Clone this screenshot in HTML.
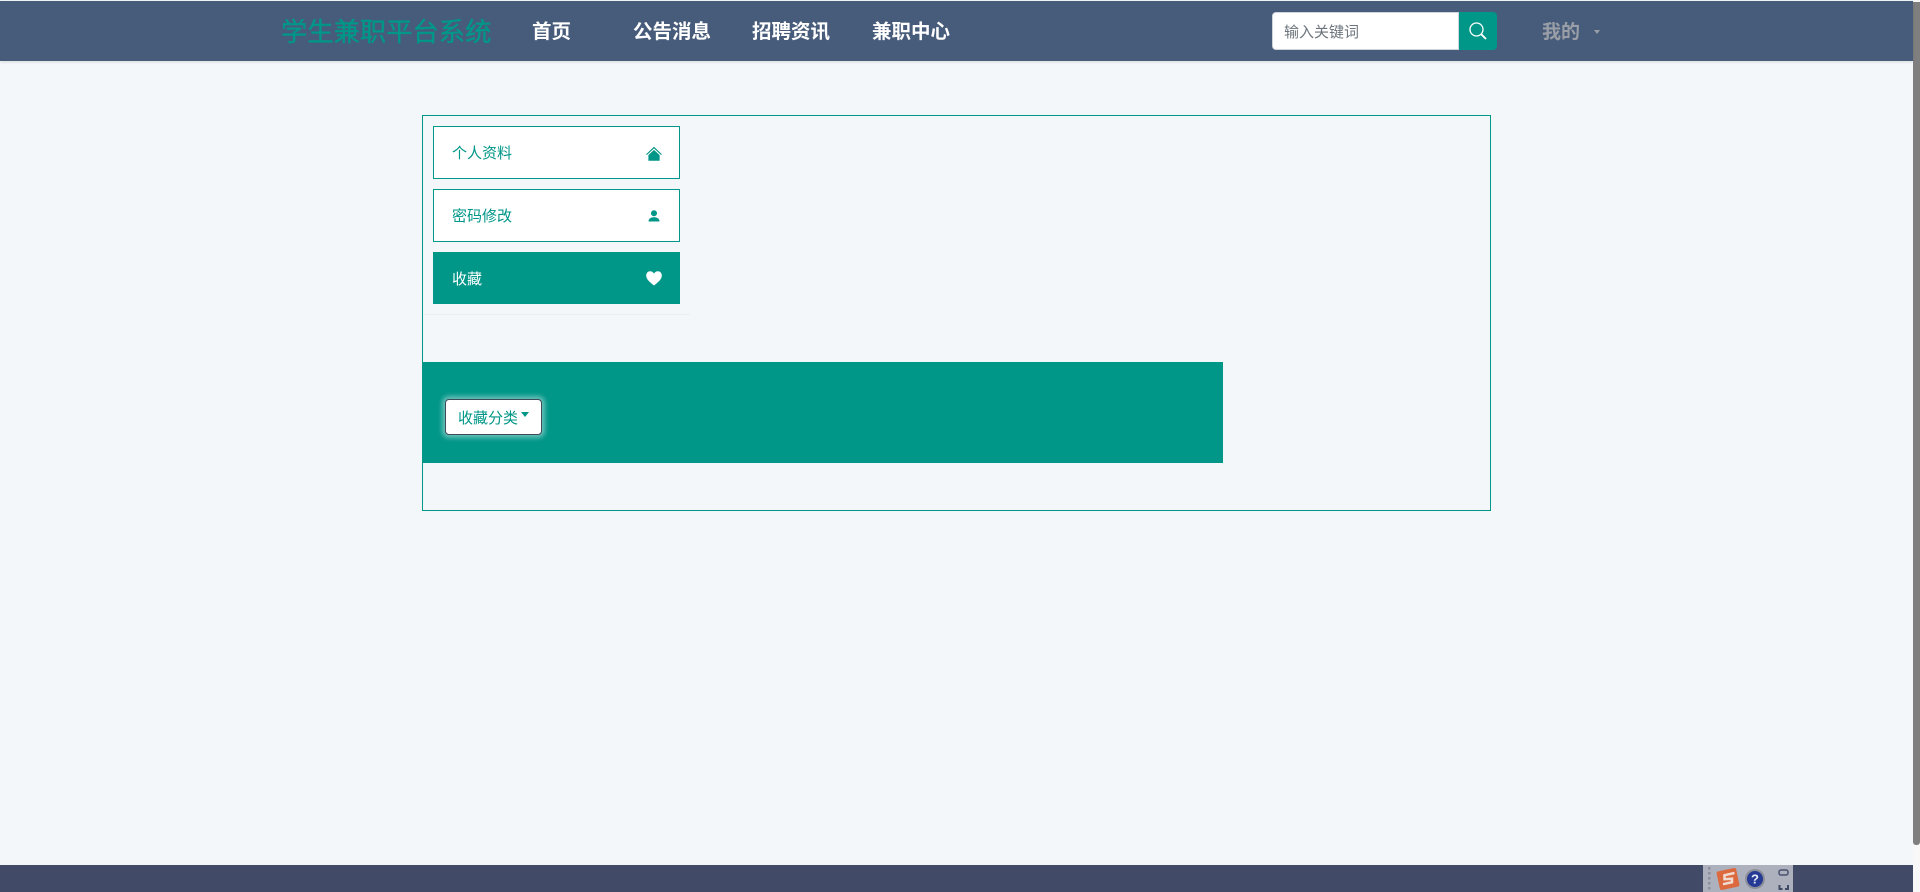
<!DOCTYPE html>
<html lang="zh-CN">
<head>
<meta charset="utf-8">
<title>学生兼职平台系统</title>
<style>
html,body{margin:0;padding:0;width:1920px;height:892px;overflow:hidden;background:#f3f7fa;font-family:"Liberation Sans","Noto Sans CJK SC",sans-serif}
*{box-sizing:border-box}
.a{position:absolute}
.t{position:absolute;white-space:nowrap;line-height:1}
.item{position:absolute;left:433px;width:247px;background:#fff;border:1px solid #009688}
</style>
</head>
<body>
<div class="a" style="left:1913px;top:0;width:7px;height:892px;background:#f8f8f8"></div>
<div class="a" style="left:1913px;top:2px;width:7px;height:843px;background:#7f7f7f;border-radius:0 0 3px 3px"></div>

<div class="a" style="left:0;top:1px;width:1913px;height:60px;background:#475c7a;box-shadow:0 1px 3px rgba(0,0,0,.12)"></div>
<div class="t" style="left:281px;top:19px;font-size:26.300px;color:#009688;-webkit-text-stroke:.4px #009688">学生兼职平台系统</div>
<div class="t" style="left:532px;top:22.500px;font-size:19.500px;font-weight:700;color:#fff">首页</div>
<div class="t" style="left:633px;top:22.500px;font-size:19.500px;font-weight:700;color:#fff">公告消息</div>
<div class="t" style="left:752px;top:22.500px;font-size:19.500px;font-weight:700;color:#fff">招聘资讯</div>
<div class="t" style="left:872px;top:22.500px;font-size:19.500px;font-weight:700;color:#fff">兼职中心</div>

<div class="a" style="left:1272px;top:12px;width:187px;height:38px;background:#fff;border-radius:4px 0 0 4px;border:1px solid #ced4da"></div>
<div class="t" style="left:1284px;top:25px;font-size:15px;color:#6c757d">输入关键词</div>
<div class="a" style="left:1459px;top:12px;width:38px;height:38px;background:#009688;border-radius:0 4px 4px 0"></div>
<svg class="a" style="left:1468px;top:21px" width="20" height="20" viewBox="0 0 20 20" fill="none" stroke="#fff"><circle cx="8.500" cy="8.500" r="6.500" stroke-width="1.300"/><path d="M13.300 13.300L18 18" stroke-width="1.900"/></svg>
<div class="t" style="left:1542px;top:23px;font-size:19px;font-weight:700;color:#999ea7">我的</div>
<div class="a" style="left:1594px;top:30px;width:0;height:0;border-left:3.500px solid transparent;border-right:3.500px solid transparent;border-top:4px solid #999ea7"></div>

<div class="a" style="left:422px;top:115px;width:1069px;height:396px;border:1px solid #009688"></div>

<div class="item" style="top:126px;height:53px"></div>
<div class="t" style="left:452px;top:146px;font-size:15px;color:#009688">个人资料</div>
<svg class="a" style="left:645px;top:145px" width="18" height="18" viewBox="0 0 16 16"><path d="M8 1.500L1 8.200l.7.7L8 3l6.300 5.900.7-.7z" fill="#009688"/><path d="M3 9l5-4.700L13 9v5H3z" fill="#009688"/></svg>
<div class="item" style="top:189px;height:53px"></div>
<div class="t" style="left:452px;top:209px;font-size:15px;color:#009688">密码修改</div>
<svg class="a" style="left:646px;top:208px" width="16" height="16" viewBox="0 0 16 16" fill="#009688"><circle cx="8" cy="5.200" r="3"/><path d="M2.500 13.500c0-3 2.500-4.300 5.500-4.300s5.500 1.300 5.500 4.300z"/></svg>
<div class="a" style="left:433px;top:252px;width:247px;height:52px;background:#009688"></div>
<div class="t" style="left:452px;top:272px;font-size:15px;color:#fff">收藏</div>
<svg class="a" style="left:645px;top:269px" width="18" height="18" viewBox="0 0 18 18"><path d="M9 16.500C4 12.500 1.200 10 1.200 6.500 1.200 4 3 2.300 5.200 2.300 6.800 2.300 8.200 3.200 9 4.600 9.800 3.200 11.200 2.300 12.800 2.300 15 2.300 16.800 4 16.800 6.500 16.800 10 14 12.500 9 16.500z" fill="#fff"/></svg>
<div class="a" style="left:423px;top:314px;width:267px;height:1px;background:#ebeef0"></div>

<div class="a" style="left:423px;top:362px;width:800px;height:101px;background:#009688"></div>
<div class="a" style="left:445px;top:399px;width:97px;height:36px;background:#fff;border:1px solid #3f4a58;border-radius:4px;box-shadow:0 0 5px 3px rgba(255,255,255,.4)"></div>
<div class="t" style="left:458px;top:410.500px;font-size:15px;color:#009688">收藏分类</div>
<div class="a" style="left:521px;top:412px;width:0;height:0;border-left:4.500px solid transparent;border-right:4.500px solid transparent;border-top:5px solid #009688"></div>

<div class="a" style="left:0;top:865px;width:1913px;height:27px;background:#414b68"></div>
<div class="a" style="left:1703px;top:865px;width:90px;height:27px;background:#adb0bd"></div>
<svg class="a" style="left:1705px;top:865px" width="88" height="27" viewBox="0 0 88 27">
<g fill="#8d909c"><rect x="3" y="2" width="2.500" height="2.500"/><rect x="3" y="7" width="2.500" height="2.500"/><rect x="3" y="12" width="2.500" height="2.500"/><rect x="3" y="17" width="2.500" height="2.500"/><rect x="3" y="22" width="2.500" height="2.500"/></g>
<rect x="13" y="4.500" width="20" height="19" rx="2" fill="#dc6a3e" transform="rotate(-12 23 14)"/>
<path d="M29.500 8l-10 2.200v4l7.500-.5v3.500l-9 2" fill="none" stroke="#f0dcd2" stroke-width="2.500"/>
<circle cx="50" cy="14" r="10" fill="#8c8f9a"/><circle cx="50" cy="14" r="8" fill="#243a94"/>
<text x="50" y="18.500" font-size="13" font-weight="700" text-anchor="middle" fill="#e8ecf8" font-family="Liberation Sans">?</text>
<rect x="74" y="5" width="9" height="5" rx="2" fill="none" stroke="#4a5270" stroke-width="1.500"/>
<path d="M74.500 20v4h3M83 20v4h-3" fill="none" stroke="#414b68" stroke-width="2"/>
</svg>
</body>
</html>
